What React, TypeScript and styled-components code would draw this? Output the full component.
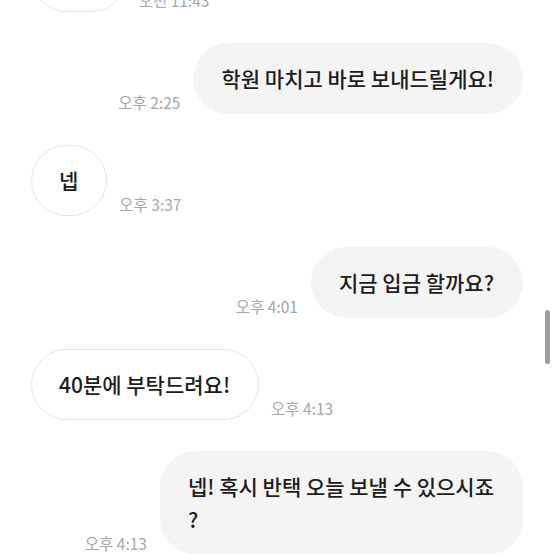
import React from "react";
import styled, { createGlobalStyle } from "styled-components";

const Global = createGlobalStyle`
  html, body { margin: 0; padding: 0; background: #ffffff; }
  body { font-family: "Noto Sans CJK KR", "Noto Sans", sans-serif; }
`;

const Screen = styled.div`
  position: relative;
  width: 554px;
  height: 554px;
  overflow: hidden;
  background: #ffffff;
`;

const List = styled.div`
  display: flex;
  flex-direction: column;
  gap: 31px;
  margin-top: -59px;
  padding: 0 31px;
`;

const Row = styled.div<{ $mine?: boolean }>`
  display: flex;
  align-items: flex-end;
  justify-content: ${(p) => (p.$mine ? "flex-end" : "flex-start")};
  gap: ${(p) => (p.$mine ? "13px" : "12px")};
`;

const Bubble = styled.div<{ $mine?: boolean }>`
  box-sizing: border-box;
  max-width: 380px;
  min-height: 71px;
  min-width: 72px;
  padding: 18px 28px 18px 27px;
  border-radius: 36px;
  font-size: 21px;
  font-weight: 500;
  line-height: 33px;
  color: #1c1c1c;
  text-align: ${(p) => (p.$mine ? "left" : "center")};
  background: ${(p) => (p.$mine ? "#f4f4f4" : "#ffffff")};
  border: 1px solid ${(p) => (p.$mine ? "#f4f4f4" : "#e6e6e6")};
`;

const Time = styled.span`
  font-size: 15.5px;
  line-height: 18px;
  color: #a6a6a6;
  white-space: nowrap;
  margin-bottom: 3px;
`;

const ScrollThumb = styled.div`
  position: absolute;
  right: 4px;
  top: 310px;
  width: 5px;
  height: 54px;
  border-radius: 3px;
  background: #9e9e9e;
`;

type Msg = { mine: boolean; text: React.ReactNode; time: string };

const messages: Msg[] = [
  { mine: false, text: "네네", time: "오전 11:43" },
  { mine: true, text: "학원 마치고 바로 보내드릴게요!", time: "오후 2:25" },
  { mine: false, text: "넵", time: "오후 3:37" },
  { mine: true, text: "지금 입금 할까요?", time: "오후 4:01" },
  { mine: false, text: "40분에 부탁드려요!", time: "오후 4:13" },
  {
    mine: true,
    text: (
      <>
        넵! 혹시 반택 오늘 보낼 수 있으시죠
        <br />?
      </>
    ),
    time: "오후 4:13",
  },
];

export default function App() {
  return (
    <>
      <Global />
      <Screen>
        <List>
          {messages.map((m, i) =>
            m.mine ? (
              <Row key={i} $mine>
                <Time>{m.time}</Time>
                <Bubble $mine>{m.text}</Bubble>
              </Row>
            ) : (
              <Row key={i}>
                <Bubble>{m.text}</Bubble>
                <Time>{m.time}</Time>
              </Row>
            )
          )}
        </List>
        <ScrollThumb />
      </Screen>
    </>
  );
}
